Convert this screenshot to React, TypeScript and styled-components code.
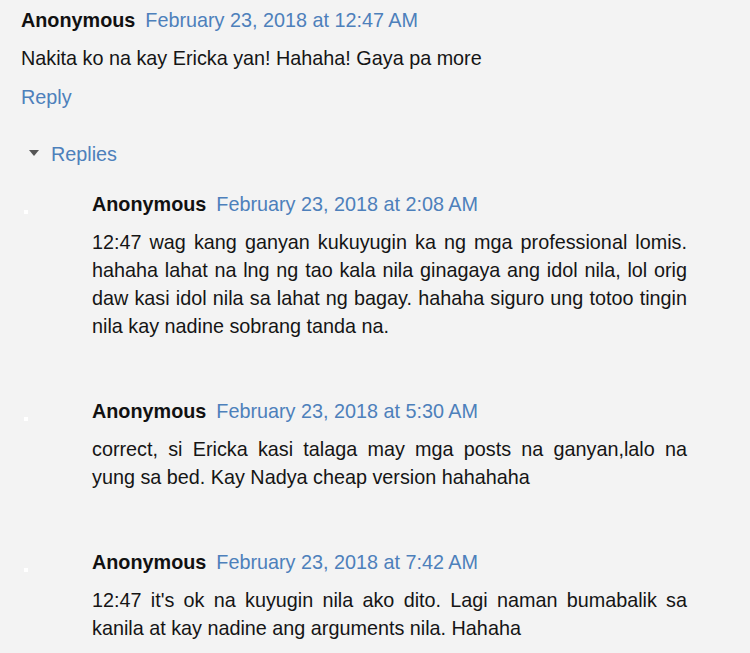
import styled, { createGlobalStyle } from "styled-components";

const GlobalStyle = createGlobalStyle`
    html, body {
        margin: 0;
        padding: 0;
        background: #f3f3f3;
    }
    body {
        font-family: "Liberation Sans", Arial, sans-serif;
        font-size: 19.8px;
        color: #222;
    }
`;

const Page = styled.div`
    background: #f3f3f3;
    min-height: 653px;
    padding: 6px 0 0 21px;
    box-sizing: border-box;
`;

const Header = styled.div`
    display: flex;
    align-items: baseline;
    gap: 10px;
    line-height: 28px;
    white-space: nowrap;
`;

const Author = styled.span`
    font-weight: bold;
    color: #111;
`;

const DateLink = styled.a`
    color: #4d80bb;
    text-decoration: none;
`;

const Body = styled.p<{ $justify?: boolean }>`
    margin: 10px 0 0;
    line-height: 28px;
    color: #151515;
    text-align: ${(p) => (p.$justify ? "justify" : "left")};
`;

const ReplyLink = styled.a`
    display: block;
    margin-top: 11px;
    line-height: 28px;
    color: #4d80bb;
    text-decoration: none;
`;

const Toggle = styled.div`
    display: flex;
    align-items: center;
    margin-top: 29px;
    padding-left: 8px;
    gap: 12px;
    line-height: 28px;
    color: #4d80bb;
`;

const Arrow = styled.span`
    width: 0;
    height: 0;
    border-left: 5.5px solid transparent;
    border-right: 5.5px solid transparent;
    border-top: 6px solid #555;
    margin-top: -3px;
`;

const ReplyList = styled.div`
    margin-top: 22px;
    display: flex;
    flex-direction: column;
    gap: 57px;
`;

const ReplyItem = styled.div`
    display: grid;
    grid-template-columns: 71px 595px;
`;

const Avatar = styled.span`
    display: block;
    width: 4px;
    height: 4px;
    margin: 20px 0 0 3px;
    background: #fff;
`;

const replies = [
    {
        date: "February 23, 2018 at 2:08 AM",
        text: "12:47 wag kang ganyan kukuyugin ka ng mga professional lomis. hahaha lahat na lng ng tao kala nila ginagaya ang idol nila, lol orig daw kasi idol nila sa lahat ng bagay. hahaha siguro ung totoo tingin nila kay nadine sobrang tanda na.",
    },
    {
        date: "February 23, 2018 at 5:30 AM",
        text: "correct, si Ericka kasi talaga may mga posts na ganyan,lalo na yung sa bed. Kay Nadya cheap version hahahaha",
    },
    {
        date: "February 23, 2018 at 7:42 AM",
        text: "12:47 it's ok na kuyugin nila ako dito. Lagi naman bumabalik sa kanila at kay nadine ang arguments nila. Hahaha",
    },
];

const App = () => {
    return (
        <>
            <GlobalStyle />
            <Page>
                <Header>
                    <Author>Anonymous</Author>
                    <DateLink href="#">February 23, 2018 at 12:47 AM</DateLink>
                </Header>
                <Body>Nakita ko na kay Ericka yan! Hahaha! Gaya pa more</Body>
                <ReplyLink href="#">Reply</ReplyLink>
                <Toggle>
                    <Arrow />
                    <span>Replies</span>
                </Toggle>
                <ReplyList>
                    {replies.map((r) => (
                        <ReplyItem key={r.date}>
                            <Avatar />
                            <div>
                                <Header>
                                    <Author>Anonymous</Author>
                                    <DateLink href="#">{r.date}</DateLink>
                                </Header>
                                <Body $justify>{r.text}</Body>
                            </div>
                        </ReplyItem>
                    ))}
                </ReplyList>
            </Page>
        </>
    );
};

export default App;
